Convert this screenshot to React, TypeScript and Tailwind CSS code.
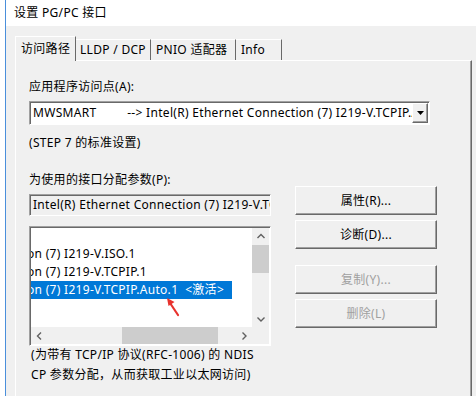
import React from 'react';

const raised =
  'border border-t-white border-l-white border-r-[#696969] border-b-[#696969] shadow-[inset_-1px_-1px_0_#a0a0a0]';
const sunken =
  'border border-t-[#a0a0a0] border-l-[#a0a0a0] border-r-white border-b-white shadow-[inset_1px_1px_0_#696969]';

function Chevron({ dir }: { dir: 'up' | 'down' | 'left' | 'right' }) {
  const d = {
    up: 'M1.5 6 L5 2.5 L8.5 6',
    down: 'M1.5 3.5 L5 7 L8.5 3.5',
    left: 'M6 1.5 L2.5 5 L6 8.5',
    right: 'M3.5 1.5 L7 5 L3.5 8.5',
  }[dir];
  return (
    <svg width="10" height="10" viewBox="0 0 10 10">
      <path d={d} fill="none" stroke="#606060" strokeWidth="1.4" />
    </svg>
  );
}

function Btn({ label, disabled }: { label: string; disabled?: boolean }) {
  return (
    <div
      className={`h-[29px] w-[142px] flex items-center justify-center bg-[#f0f0f0] ${raised} ${
        disabled ? 'text-[#a0a0a0]' : 'text-black'
      }`}
    >
      {label}
    </div>
  );
}

export default function App() {
  return (
    <div className="w-[476px] h-[396px] overflow-hidden bg-white pl-[5px] text-[12px] leading-[16px] tracking-[0.3px] text-black font-['Noto_Sans','Noto_Sans_CJK_SC',sans-serif]">
      <div className="h-full border-l border-[#4a8fdb] flex flex-col">
        {/* title bar */}
        <div className="h-[26px] shrink-0 bg-white flex items-center pl-[8px]">设置 PG/PC 接口</div>

        {/* body */}
        <div className="flex-1 bg-[#f0f0f0] pl-[9px] pt-[11px]">
          {/* tabs */}
          <div className="flex items-end h-[24px] relative z-10 -mb-px">
            <div className="h-[25px] w-[61px] bg-[#f0f0f0] border-l border-t border-r border-t-white border-l-white border-r-[#696969] flex items-center pl-[5px]">
              访问路径
            </div>
            <div className="h-[21px] w-[75px] border-t border-r border-t-white border-r-[#696969] flex items-center pl-[4px] mb-px">
              LLDP / DCP
            </div>
            <div className="h-[21px] w-[85px] border-t border-r border-t-white border-r-[#696969] flex items-center pl-[5px] mb-px">
              PNIO 适配器
            </div>
            <div className="h-[21px] w-[46px] border-t border-r border-t-white border-r-[#696969] flex items-center pl-[5px] mb-px">
              Info
            </div>
          </div>

          {/* panel */}
          <div className="w-[457px] h-[340px] border-t border-l border-r border-t-white border-l-white border-r-[#696969] shadow-[inset_-1px_0_0_#a0a0a0] pl-[13px] pt-[18px]">
            <div>应用程序访问点(A):</div>
            <div className={`mt-[6px] h-[24px] w-[401px] bg-white flex items-center ${sunken}`}>
              <div className="flex-1 overflow-hidden whitespace-pre pl-[3px]">
                MWSMART{'         '}--&gt; Intel(R) Ethernet Connection (7) I219-V.TCPIP.Auto.1
              </div>
              <div className={`h-[20px] w-[16px] mr-px bg-[#f0f0f0] flex items-center justify-center ${raised}`}>
                <svg width="7" height="4" viewBox="0 0 7 4">
                  <path d="M0 0 H7 L3.5 4 Z" fill="#000" />
                </svg>
              </div>
            </div>
            <div className="mt-[10px]">(STEP 7 的标准设置)</div>
            <div className="mt-[21px]">为使用的接口分配参数(P):</div>

            <div className="flex gap-[24px]">
              <div className="w-[242px]">
                <div className={`mt-[6px] h-[22px] bg-[#f0f0f0] flex items-center overflow-hidden whitespace-nowrap pl-[3px] ${sunken}`}>
                  Intel(R) Ethernet Connection (7) I219-V.TCPIP.Auto.1
                </div>

                {/* list box */}
                <div className={`relative mt-[10px] h-[120px] bg-white ${sunken} p-px grid grid-cols-[1fr_17px] grid-rows-[1fr_17px]`}>
                  <div className="overflow-hidden pt-[17px] whitespace-nowrap leading-[18px]">
                    <div className="-ml-[4px]">on (7) I219-V.ISO.1</div>
                    <div className="-ml-[4px]">on (7) I219-V.TCPIP.1</div>
                    <div className="w-[201px] bg-[#0078d7] text-white overflow-hidden">
                      <span className="-ml-[4px] inline-block whitespace-pre">on (7) I219-V.TCPIP.Auto.1{'  '}&lt;激活&gt;</span>
                    </div>
                  </div>
                  <div className="bg-[#f0f0f0] flex flex-col">
                    <div className="h-[17px] flex items-center justify-center">
                      <Chevron dir="up" />
                    </div>
                    <div className="h-[28px] bg-[#cdcdcd]" />
                    <div className="flex-1" />
                    <div className="h-[17px] flex items-center justify-center">
                      <Chevron dir="down" />
                    </div>
                  </div>
                  <div className="bg-[#f0f0f0] flex items-center">
                    <div className="w-[17px] h-full flex items-center justify-center">
                      <Chevron dir="left" />
                    </div>
                    <div className="w-[74px]" />
                    <div className="w-[96px] h-full bg-[#cdcdcd]" />
                    <div className="flex-1" />
                    <div className="w-[17px] h-full flex items-center justify-center">
                      <Chevron dir="right" />
                    </div>
                  </div>
                  <div className="bg-[#f0f0f0]" />

                  {/* red pointer arrow */}
                  <svg className="absolute left-[135px] top-[70px]" width="16" height="20" viewBox="0 0 16 20">
                    <path d="M13 18 L5 6" stroke="#e8322d" strokeWidth="2.2" strokeLinecap="round" />
                    <path d="M2 1 L9.5 5 L3.5 9 Z" fill="#e8322d" />
                  </svg>
                </div>
              </div>

              <div className="flex flex-col -mt-[2px]">
                <Btn label="属性(R)..." />
                <div className="h-[5px]" />
                <Btn label="诊断(D)..." />
                <div className="h-[16px]" />
                <Btn label="复制(Y)..." disabled />
                <div className="h-[5px]" />
                <Btn label="删除(L)" disabled />
              </div>
            </div>

            <div className="pl-[2px] leading-[20px] -mt-px">
              <div>(为带有 TCP/IP 协议(RFC-1006) 的 NDIS</div>
              <div>CP 参数分配，从而获取工业以太网访问)</div>
            </div>
          </div>
        </div>
      </div>
    </div>
  );
}
